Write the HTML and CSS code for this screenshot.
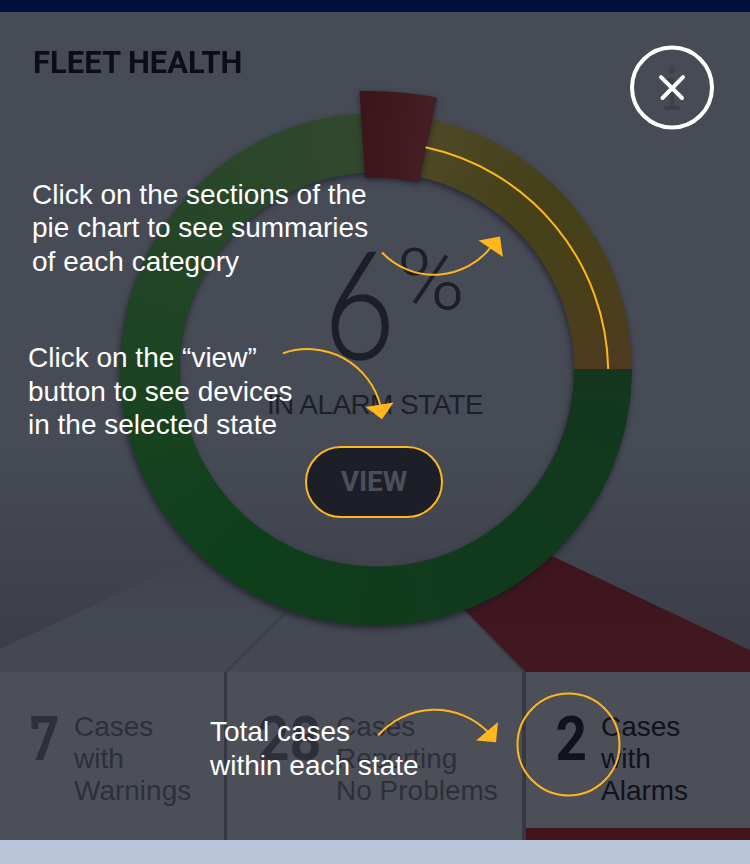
FILE: index.html
```html
<!DOCTYPE html>
<html lang="en">
<head>
<meta charset="utf-8">
<title>Fleet Health</title>
<link rel="stylesheet" href="styles.css">
</head>
<body>
<div class="screen">
  <div class="topbar"></div>
  <main class="stage">
    <svg class="fan layer" width="750" height="660" viewBox="0 12 750 660">
      <defs>
        <linearGradient id="fanGrey" gradientUnits="userSpaceOnUse" x1="0" y1="550" x2="0" y2="672">
          <stop offset="0" stop-color="#40434e"/><stop offset=".6" stop-color="#444852"/><stop offset="1" stop-color="#464852"/>
        </linearGradient>
        <linearGradient id="fanRed" x1="0" y1="0" x2="0" y2="1">
          <stop offset="0" stop-color="#3e141d"/><stop offset="1" stop-color="#421922"/>
        </linearGradient>
      </defs>
      <path d="M0 649 L202 555 H465 L524 672 H0Z" fill="url(#fanGrey)"/>
      <path d="M226 672 L290 608" stroke="#3b3e49" stroke-width="2.2"/>
      <path d="M460 605 L524 672" stroke="#3b3e49" stroke-width="3"/>
      <path d="M550 555 L750 650 V672 H525.500 L462 607Z" fill="url(#fanRed)"/>
    </svg>
    <div class="ring-shadow layer"><div class="ring"></div></div>
    <svg class="layer wedge" width="750" height="660" viewBox="0 12 750 660">
      <defs>
        <linearGradient id="wedge" x1="0" y1="0" x2="1" y2=".15">
          <stop offset="0" stop-color="#3b1519"/><stop offset=".5" stop-color="#3f191d"/><stop offset="1" stop-color="#471e26"/>
        </linearGradient>
      </defs>
      <path d="M359.500 91 Q400 90 437 97.500 L419 182.500 Q392 177 365 178Z" fill="url(#wedge)"/>
    </svg>
    <h1 class="title layer">FLEET HEALTH</h1>
    <svg class="info layer" width="16" height="44" viewBox="0 0 16 44">
      <circle cx="8" cy="4" r="3.300"/><path d="M4 14H8V41M2 42H14"/>
    </svg>
    <section class="readout layer">
      <div class="value"><span class="number">6</span><span class="percent">%</span></div>
      <p class="state">IN ALARM STATE</p>
      <button class="view"><span>VIEW</span></button>
    </section>
  </main>
  <section class="stats">
    <div class="stat warning"><span class="count">7</span><p>Cases<br>with<br>Warnings</p></div>
    <div class="stat normal"><span class="count">28</span><p>Cases<br>Reporting<br>No Problems</p></div>
    <div class="stat alarm"><span class="count">2</span><p>Cases<br>with<br>Alarms</p></div>
  </section>
  <div class="bottombar"></div>

  <div class="coach">
    <svg class="marks" width="750" height="864" viewBox="0 0 750 864">
      <g fill="none" stroke="#ffb71b" stroke-width="2">
        <path d="M425.500 147.300 A231 231 0 0 1 608.200 369"/>
        <path d="M382 252.500 A72 72 0 0 0 491 247"/>
        <path d="M283 353.300 A75 75 0 0 1 380.500 406"/>
        <path d="M378 735.500 A75 75 0 0 1 488 732"/>
        <circle cx="568.500" cy="744.500" r="51"/>
      </g>
      <g fill="#ffb71b">
        <path d="M500 236.500 L478.500 240.500 L503 257Z"/>
        <path d="M365.500 407 L393.500 402.500 L382 419.300Z"/>
        <path d="M498 722 L476 740.500 L496 742.200Z"/>
      </g>
      <g fill="none" stroke="#fff" stroke-width="4" stroke-linecap="round">
        <circle cx="672" cy="87.500" r="40"/>
        <path d="M661 77.200 L682 98M683 77.200 L662.500 98"/>
      </g>
    </svg>
    <p class="tip tip-chart">Click on the sections of the<br>pie chart to see summaries<br>of each category</p>
    <p class="tip tip-view">Click on the “view”<br>button to see devices<br>in the selected state</p>
    <p class="tip tip-total">Total cases<br>within each state</p>
  </div>
</div>
</body>
</html>
```
FILE: styles.css
```css
* { box-sizing: border-box; }
body, h1, p { margin: 0; }
body { font-family: "Liberation Sans", Arial, sans-serif; background: #bac6d9; }
svg { display: block; }

.screen { position: relative; width: 750px; height: 864px; overflow: hidden; }
.topbar { height: 12px; background: #001140; }
.bottombar { height: 24px; background: #bac6d9; }

.stage {
  display: grid;
  height: 660px;
  background: linear-gradient(#474b55 0, #474b55 430px, #3b3e49 640px);
}
.layer { grid-area: 1 / 1; }
.ring-shadow { padding: 101px 0 0 120px; filter: drop-shadow(-1px 3px 3px rgba(20, 20, 35, .65)); }
.ring {
  width: 512px;
  height: 513px;
  border-radius: 50%;
  background: conic-gradient(#4e4828 0deg, #4c4724 18deg, #454018 45deg, #48401a 65deg, #4f3a20 90deg,
    #14361e 90deg, #113a1d 140deg, #113c1c 180deg, #0d3f1a 215deg, #18421f 255deg, #1e4424 280deg, #2a472a 325deg, #32482f 360deg);
  -webkit-mask: radial-gradient(circle at 257px 256.5px, transparent 196.5px, #000 197.5px);
  mask: radial-gradient(circle at 257px 256.5px, transparent 196.5px, #000 197.5px);
}
.wedge { filter: drop-shadow(0 2px 3px rgba(20, 20, 35, .6)); }

.title {
  padding: 32px 0 0 33px;
  font: 700 32px/36px Roboto, sans-serif;
  color: #0b0d18;
  transform: scaleX(.968);
  transform-origin: 33px 0;
}
.info { margin: 54px 0 0 664px; fill: #3d404b; }
.info path { fill: none; stroke: #3d404b; stroke-width: 4; stroke-linecap: round; }

.readout { display: flex; flex-direction: column; align-items: center; padding-top: 225px; color: #1d1f28; }
.value { display: flex; height: 150px; width: 750px; padding-left: 326px; }
.number {
  width: 71px;
  margin: -11px 2.5px 0 -2.5px;
  font: 300 150px/150px Lato, sans-serif;
  -webkit-text-stroke: 1.6px #1d1f28;
  transform: scaleX(.82);
  transform-origin: -2px 0;
}
.percent { margin-top: 1px; font: 300 85px/84px Roboto, sans-serif; transform: scaleX(1.09); transform-origin: 5px 0; }
.state { margin-top: 1px; font-size: 28px; line-height: 34px; letter-spacing: -.6px; }
.view {
  width: 138px;
  height: 72px;
  margin: 24px 2px 0 0;
  border: 2px solid #ffb71b;
  border-radius: 36px;
  background: #1d1f28;
  color: #4c4f58;
  font: 700 28px/32px Roboto, sans-serif;
}

.stats {
  display: grid;
  grid-template-columns: 224px 298px 228px;
  height: 168px;
  background: #4c4f58;
  color: #2d2f3b;
}
.stat { display: flex; padding: 38px 0 0 27px; }
.stat p { margin-top: 1px; font-size: 28px; line-height: 32px; }
.count { width: 47px; margin-top: -1px; font: 700 61px/61px Roboto, sans-serif; transform: scaleX(.84); transform-origin: 18px 0; }
.warning .count { position: relative; }
.warning .count::before { content: ""; position: absolute; left: 1.500px; top: 7px; width: 8px; height: 13px; background: currentColor; }
.normal { border-left: 3px solid #353842; padding-left: 33px; }
.normal .count { width: 76px; transform: scaleX(.91); transform-origin: -26px 0; }
.alarm { border-left: 4px solid #353842; padding-left: 28px; color: #10121e;
  background: linear-gradient(#42151d, #42151d) bottom / 100% 12px no-repeat; }
.alarm .count { transform: scaleX(.9); transform-origin: 14px 0; }

.coach { position: absolute; inset: 0; }
.marks { position: absolute; inset: 0; }
.tip { position: absolute; color: #fff; font-size: 28px; line-height: 33.5px; white-space: nowrap; }
.tip-chart { left: 32px; top: 177.750px; }
.tip-view { left: 28px; top: 341px; }
.tip-total { left: 210px; top: 715px; }
```
